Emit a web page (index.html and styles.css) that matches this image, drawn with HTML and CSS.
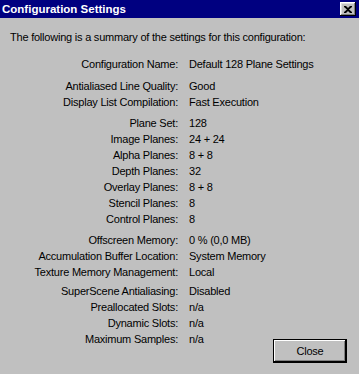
FILE: index.html
```html
<!DOCTYPE html>
<html lang="en">

<head>
    <meta charset="UTF-8">
    <title>Configuration Settings</title>
    <link rel="stylesheet" href="styles.css">
</head>

<body>
    <div class="window">
        <!-- Title bar -->
        <div class="title-bar">
            <span class="title-text">Configuration Settings</span>
            <button class="title-close" aria-label="Close">
                <svg width="8" height="7" viewBox="0 0 8 7">
                    <path d="M0 0h2l2 2 2-2h2v1L5 3.5 8 6v1H6L4 5 2 7H0V6l3-2.5L0 1z" fill="#000"/>
                </svg>
            </button>
        </div>

        <div class="content">
            <p class="intro">The following is a summary of the settings for this configuration:</p>

            <div class="group group-name">
                <div class="row"><span class="label">Configuration Name:</span><span class="value">Default 128 Plane Settings</span></div>
            </div>

            <div class="group">
                <div class="row"><span class="label">Antialiased Line Quality:</span><span class="value">Good</span></div>
                <div class="row"><span class="label">Display List Compilation:</span><span class="value">Fast Execution</span></div>
            </div>

            <div class="group">
                <div class="row"><span class="label">Plane Set:</span><span class="value">128</span></div>
                <div class="row"><span class="label">Image Planes:</span><span class="value">24 + 24</span></div>
                <div class="row"><span class="label">Alpha Planes:</span><span class="value">8 + 8</span></div>
                <div class="row"><span class="label">Depth Planes:</span><span class="value">32</span></div>
                <div class="row"><span class="label">Overlay Planes:</span><span class="value">8 + 8</span></div>
                <div class="row"><span class="label">Stencil Planes:</span><span class="value">8</span></div>
                <div class="row"><span class="label">Control Planes:</span><span class="value">8</span></div>
            </div>

            <div class="group group-tight">
                <div class="row"><span class="label">Offscreen Memory:</span><span class="value">0 % (0,0 MB)</span></div>
                <div class="row"><span class="label">Accumulation Buffer Location:</span><span class="value">System Memory</span></div>
                <div class="row"><span class="label">Texture Memory Management:</span><span class="value">Local</span></div>
            </div>

            <div class="group group-last">
                <div class="row"><span class="label">SuperScene Antialiasing:</span><span class="value">Disabled</span></div>
                <div class="row"><span class="label">Preallocated Slots:</span><span class="value">n/a</span></div>
                <div class="row"><span class="label">Dynamic Slots:</span><span class="value">n/a</span></div>
                <div class="row"><span class="label">Maximum Samples:</span><span class="value">n/a</span></div>
            </div>

            <div class="footer">
                <button class="close-button">Close</button>
            </div>
        </div>
    </div>
</body>

</html>
```

FILE: styles.css
```css
/* Base styling */
body {
    margin: 0;
    background-color: #c0c0c0;
    font-family: "Liberation Sans", Arial, sans-serif;
    font-size: 11px;
    letter-spacing: -0.22px;
    color: #000;
}

.window {
    width: 359px;
    height: 374px;
    display: flex;
    flex-direction: column;
}

/* Title bar */
.title-bar {
    height: 18px;
    background-color: #000080;
    color: #fff;
    display: flex;
    align-items: center;
    justify-content: space-between;
    padding: 0 3px 0 2px;
}

.title-text {
    font-family: "Liberation Sans", Arial, sans-serif;
    font-weight: bold;
    font-size: 11.5px;
    letter-spacing: 0;
}

.title-close {
    width: 16px;
    height: 14px;
    padding: 0;
    background: #c0c0c0;
    border: none;
    box-shadow: inset -1px -1px #000, inset 1px 1px #fff, inset -2px -2px #808080, inset 2px 2px #dfdfdf;
    display: flex;
    align-items: center;
    justify-content: center;
}

/* Content */
.content {
    padding: 11px 0 0 10px;
    flex: 1;
    display: flex;
    flex-direction: column;
}

.intro {
    margin: 0 0 11px;
    line-height: 16px;
}

.group {
    margin-bottom: 5px;
}

.group-name {
    margin-bottom: 6px;
}

.group-tight {
    margin-bottom: 3px;
}

.group-last {
    margin-bottom: 0;
}

.row {
    display: grid;
    grid-template-columns: 168px 1fr;
    column-gap: 11px;
    line-height: 16px;
}

.label {
    text-align: right;
}

/* Close button */
.footer {
    display: flex;
    justify-content: flex-end;
    padding-right: 12px;
    margin-top: -8px;
}

.close-button {
    width: 74px;
    height: 24px;
    background: #c0c0c0;
    border: 1px solid #000;
    box-shadow: inset -1px -1px #000, inset 1px 1px #fff, inset -2px -2px #808080;
    font-family: "Liberation Sans", Arial, sans-serif;
    font-size: 11px;
    letter-spacing: -0.22px;
    color: #000;
    padding: 0;
}
```
